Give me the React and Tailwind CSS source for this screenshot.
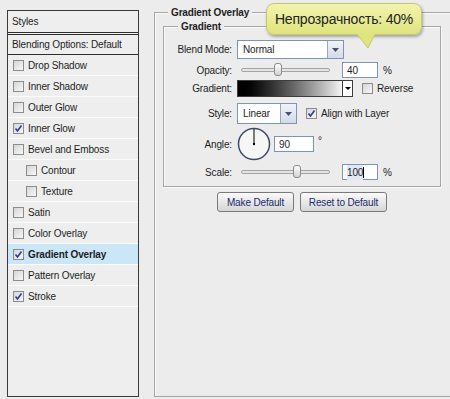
import React from 'react'

const effects = [
  { name: 'Drop Shadow' },
  { name: 'Inner Shadow' },
  { name: 'Outer Glow' },
  { name: 'Inner Glow', checked: true },
  { name: 'Bevel and Emboss' },
  { name: 'Contour', sub: true },
  { name: 'Texture', sub: true },
  { name: 'Satin' },
  { name: 'Color Overlay' },
  { name: 'Gradient Overlay', checked: true, active: true },
  { name: 'Pattern Overlay' },
  { name: 'Stroke', checked: true },
]

function Check({ checked }) {
  return (
    <div className="w-[11px] h-[11px] shrink-0 border border-[#8c8c8c] bg-gradient-to-br from-[#d6d6d6] to-[#f7f7f7] flex items-center justify-center">
      {checked && (
        <svg width="9" height="9" viewBox="0 0 9 9">
          <path d="M1.5 4.5 L3.5 7 L7.5 1.5" fill="none" stroke="#2b3a9c" strokeWidth="1.6" />
        </svg>
      )}
    </div>
  )
}

function Arrow() {
  return (
    <div className="w-[16px] h-full shrink-0 border-l border-[#9aa6bd] bg-gradient-to-b from-[#f0f3f8] to-[#d4dbe7] flex items-center justify-center">
      <svg width="7" height="4" viewBox="0 0 7 4">
        <path d="M0 0 H7 L3.5 4 Z" fill="#44507a" />
      </svg>
    </div>
  )
}

function Select({ value, width }) {
  return (
    <div className={`${width} h-full bg-white border border-[#7f93b5] flex items-center`}>
      <span className="flex-1 pl-[5px]">{value}</span>
      <Arrow />
    </div>
  )
}

function Slider({ pos }) {
  return (
    <div className="relative w-[97px] h-full flex items-center">
      <div className="mx-[4px] flex-1 h-[4px] rounded-full border border-[#a4a4a4] bg-[#e4e4e4]" />
      <div
        className="absolute top-[1px] w-[8px] h-[13px] rounded-[3px] border border-[#8b8b8b] bg-gradient-to-b from-[#fdfdfd] to-[#d2d2d2]"
        style={{ left: pos }}
      />
    </div>
  )
}

function Field({ value, width, caret }) {
  return (
    <div className={`${width} h-full bg-white border border-[#7f93b5] flex items-center pl-[4px]`}>
      <span className={caret ? 'bg-[#dfe8f4]' : ''}>{value}</span>
      {caret && <span className="w-px h-[11px] bg-black" />}
    </div>
  )
}

function Row({ label, h, mt, children }) {
  return (
    <div className={`flex items-center ${h} ${mt}`}>
      <span className="w-[68px] text-right">{label}</span>
      <div className="ml-[5px] h-full flex items-center">{children}</div>
    </div>
  )
}

function Button({ children, width }) {
  return (
    <div className={`${width} h-[20px] rounded-[3px] border border-[#7a7a7a] bg-gradient-to-b from-[#fafafa] to-[#d6d6d6] flex items-center justify-center text-[#1c2a6e]`}>
      {children}
    </div>
  )
}

export default function App() {
  return (
    <div className="relative w-[450px] h-[399px] overflow-hidden bg-[#ececec] flex font-['Liberation_Sans',Arial,sans-serif] text-[10px] tracking-[-0.15px] text-[#1e1e1e]">
      <div className="pl-[7px] pt-[10px]">
        <div className="w-[132px] h-[387px] border border-[#3a3a3a] bg-[#eeeeee] flex flex-col">
          <div className="h-[24px] px-[4px] flex items-center border-b-[3px] border-double border-[#2e2e2e]">Styles</div>
          <div className="h-[20px] px-[4px] flex items-center border-b border-[#2e2e2e]">Blending Options: Default</div>
          {effects.map((e) => (
            <div
              key={e.name}
              className={`h-[21px] flex items-center gap-[4px] border-b border-[#fbfbfb] ${e.sub ? 'pl-[18px]' : 'pl-[5px]'} ${e.active ? 'bg-[#cbe7f7] font-bold' : ''}`}
            >
              <Check checked={e.checked} />
              <span>{e.name}</span>
            </div>
          ))}
        </div>
      </div>

      <div className="pl-[15px] pt-[12px] flex-1">
        <div className="relative h-[385px] border-t border-l border-b border-[#a5a5a5] shadow-[inset_1px_1px_0_#fafafa]">
          <span className="absolute -top-[7px] left-[13px] px-[3px] bg-[#ececec] font-bold leading-[13px]">Gradient Overlay</span>

          <div className="relative mt-[13px] ml-[8px] w-[278px] h-[161px] border border-[#a5a5a5] shadow-[inset_1px_1px_0_#fafafa,1px_1px_0_#fafafa]">
            <span className="absolute -top-[7px] left-[14px] px-[3px] bg-[#ececec] font-bold leading-[13px]">Gradient</span>
            <div className="pt-[13px]">
              <Row label="Blend Mode:" h="h-[19px]" mt="">
                <Select value="Normal" width="w-[107px]" />
              </Row>
              <Row label="Opacity:" h="h-[16px]" mt="mt-[3px]">
                <Slider pos={37} />
                <div className="ml-[8px] h-full">
                  <Field value="40" width="w-[36px]" />
                </div>
                <span className="ml-[5px]">%</span>
              </Row>
              <Row label="Gradient:" h="h-[17px]" mt="mt-[2px]">
                <div className="w-[116px] h-full border border-[#3c3c3c] flex">
                  <div className="flex-1 bg-gradient-to-r from-black to-[#f4f4f4]" />
                  <div className="w-[10px] bg-white border-l border-[#3c3c3c] flex items-center justify-center">
                    <svg width="6" height="3" viewBox="0 0 6 3">
                      <path d="M0 0 H6 L3 3 Z" fill="#000" />
                    </svg>
                  </div>
                </div>
                <div className="ml-[9px]">
                  <Check />
                </div>
                <span className="ml-[4px]">Reverse</span>
              </Row>
              <Row label="Style:" h="h-[21px]" mt="mt-[6px]">
                <Select value="Linear" width="w-[60px]" />
                <div className="ml-[9px]">
                  <Check checked />
                </div>
                <span className="ml-[4px]">Align with Layer</span>
              </Row>
              <Row label="Angle:" h="h-[34px]" mt="mt-[3px]">
                <svg width="34" height="34" viewBox="0 0 34 34">
                  <circle cx="17" cy="17" r="15.5" fill="#f6f6f6" stroke="#3d4a6b" strokeWidth="1.5" />
                  <line x1="17" y1="2" x2="17" y2="17" stroke="#000" strokeWidth="1" />
                  <circle cx="17" cy="17" r="1.2" fill="#000" />
                </svg>
                <div className="ml-[3px] h-[16px]">
                  <Field value="90" width="w-[40px]" />
                </div>
                <span className="ml-[4px] -mt-[8px]">°</span>
              </Row>
              <Row label="Scale:" h="h-[16px]" mt="mt-[3px]">
                <Slider pos={56} />
                <div className="ml-[8px] h-full">
                  <Field value="100" width="w-[36px]" caret />
                </div>
                <span className="ml-[5px]">%</span>
              </Row>
            </div>
          </div>

          <div className="ml-[8px] w-[278px] mt-[5px] flex justify-center gap-[6px]">
            <Button width="w-[77px]">Make Default</Button>
            <Button width="w-[87px]">Reset to Default</Button>
          </div>
        </div>
      </div>

      <div className="absolute left-[266px] top-[3px]">
        <div className="w-[156px] h-[32px] rounded-[8px] border border-[#c4c86e] bg-gradient-to-b from-[#f2f4ae] to-[#dfe47c] shadow-[1px_2px_3px_rgba(0,0,0,0.3)] flex items-center justify-center text-[14px] tracking-[-0.2px] text-[#222]">
          Непрозрачность: 40%
        </div>
        <svg className="absolute left-[90px] top-[30px]" width="22" height="16" viewBox="0 0 22 16">
          <path d="M1 1 L12 15 L19 1" fill="#dfe47c" stroke="#c4c86e" strokeWidth="1" />
          <path d="M1.5 0 L18.5 0 L18.5 2 L1.5 2 Z" fill="#dfe47c" />
        </svg>
      </div>
    </div>
  )
}
